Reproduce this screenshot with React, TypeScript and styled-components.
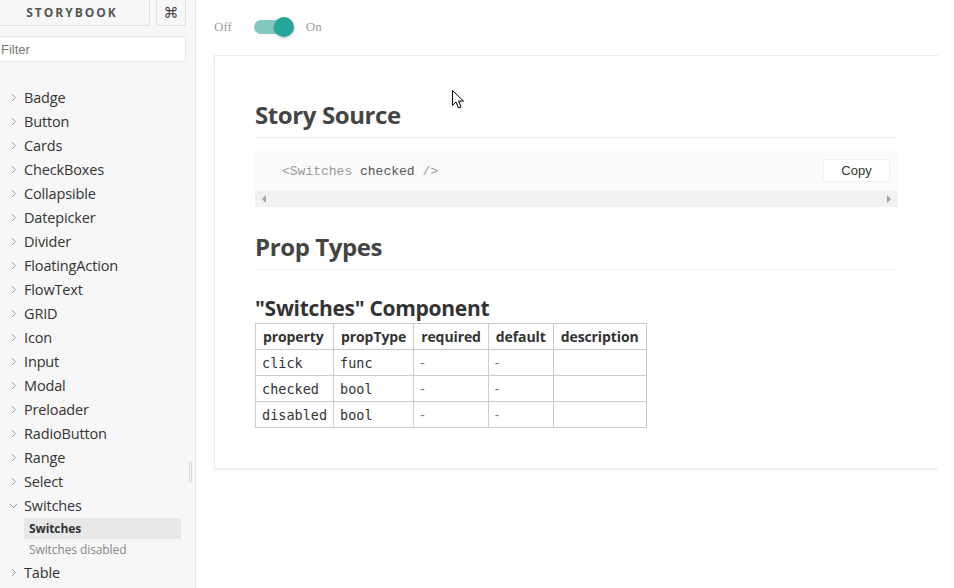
import React from "react";
import styled, { createGlobalStyle } from "styled-components";

const Global = createGlobalStyle`
  html, body { margin: 0; padding: 0; background: #fff; }
  body { font-family: "Open Sans", "Noto Sans", sans-serif; overflow: hidden; }
  * { box-sizing: border-box; }
`;

const Page = styled.div`
  display: flex;
  width: 954px;
  height: 588px;
  overflow: hidden;
  position: relative;
`;

const Sidebar = styled.aside`
  width: 196px;
  flex: none;
  background: #f7f7f7;
  border-right: 1px solid #e3e3e3;
  position: relative;
  overflow: hidden;
`;

const HeaderRow = styled.div`
  display: flex;
  gap: 6px;
  margin-left: -8px;
  width: 194px;
`;

const BrandBox = styled.div`
  flex: 1;
  height: 26px;
  border: 1px solid #e1e1e1;
  border-top: none;
  border-radius: 0 0 3px 3px;
  display: flex;
  align-items: center;
  justify-content: center;
  font-family: "Open Sans", sans-serif;
  font-weight: 700;
  font-size: 12px;
  letter-spacing: 2px;
  color: #555;
  padding-left: 2px;
`;

const KeyBox = styled.div`
  width: 30px;
  height: 26px;
  border: 1px solid #e1e1e1;
  border-top: none;
  border-radius: 0 0 3px 3px;
  display: flex;
  align-items: center;
  justify-content: center;
  font-size: 15px;
  color: #444;
  font-family: "DejaVu Sans", sans-serif;
`;

const Filter = styled.div`
  margin: 10px 0 0 -8px;
  width: 194px;
  height: 26px;
  background: #fff;
  border: 1px solid #e6e6e6;
  border-radius: 2px;
  display: flex;
  align-items: center;
  padding-left: 8px;
  font-size: 13px;
  color: #777;
  font-family: "Liberation Sans", Arial, sans-serif;
`;

const Tree = styled.ul`
  list-style: none;
  margin: 23px 0 0 0;
  padding: 0;
`;

const Item = styled.li`
  height: 24px;
  display: flex;
  align-items: center;
  gap: 5px;
  padding-left: 8px;
  font-size: 14.5px;
  color: #333;
  letter-spacing: -0.15px;
`;

const Chevron = styled.svg`
  width: 11px;
  height: 11px;
  flex: none;
`;

const SubList = styled.ul`
  list-style: none;
  margin: 0;
  padding: 1px 0 0 24px;
`;

const SubItem = styled.li<{ $active?: boolean }>`
  height: 21px;
  width: 157px;
  display: flex;
  align-items: center;
  padding-left: 5px;
  font-size: 12px;
  font-weight: ${(p) => (p.$active ? 700 : 400)};
  color: ${(p) => (p.$active ? "#333" : "#888")};
  background: ${(p) => (p.$active ? "#e8e8e8" : "transparent")};
  letter-spacing: -0.1px;
`;

const ScrollThumb = styled.div`
  position: absolute;
  left: 189px;
  top: 462px;
  width: 3px;
  height: 20px;
  border-left: 1px solid #d8d8d8;
  border-right: 1px solid #d8d8d8;
`;

const Main = styled.main`
  flex: 1;
  padding: 0 0 0 18px;
  overflow: hidden;
`;

const ToggleRow = styled.div`
  height: 55px;
  display: flex;
  align-items: center;
  font-family: "Liberation Serif", serif;
  font-size: 13px;
  color: #9e9e9e;
  padding-bottom: 2px;
`;

const Track = styled.div`
  position: relative;
  width: 38px;
  height: 14px;
  margin: 0 14px 0 22px;
  border-radius: 8px;
  background: #84c7c1;
`;

const Knob = styled.div`
  position: absolute;
  right: -2px;
  top: -3px;
  width: 20px;
  height: 20px;
  border-radius: 50%;
  background: #26a69a;
  box-shadow: 0 1px 3px rgba(0, 0, 0, 0.25);
`;

const Card = styled.section`
  width: 724px;
  border: 1px solid #ececec;
  border-right: none;
  box-shadow: 0 2px 3px rgba(0, 0, 0, 0.06);
  padding: 41px 40px 40px 40px;
  font-family: "Open Sans", sans-serif;
  color: #333;
`;

const H2 = styled.h2`
  margin: 0 0 13px 0;
  padding: 0 0 4px 0;
  font-size: 24px;
  font-weight: 700;
  color: #444;
  letter-spacing: -0.4px;
  line-height: 36px;
  border-bottom: 1px solid #eeeeee;
`;

const CodeBlock = styled.div`
  background: #fafafa;
  position: relative;
  margin-bottom: 22px;
`;

const CodeLine = styled.pre`
  margin: 0;
  height: 40px;
  display: flex;
  align-items: center;
  padding-left: 27px;
  font-family: "Liberation Mono", "Courier New", monospace;
  font-size: 13px;
  color: #999;
`;

const Attr = styled.span`
  color: #555;
`;

const CopyButton = styled.button`
  position: absolute;
  right: 8px;
  top: 8px;
  width: 67px;
  height: 23px;
  background: #fff;
  border: 1px solid #eee;
  border-radius: 2px;
  font-family: "Liberation Sans", Arial, sans-serif;
  font-size: 13px;
  color: #333;
  padding: 0;
`;

const HScroll = styled.div`
  height: 16px;
  background: #f1f1f1;
  display: flex;
  align-items: center;
  justify-content: space-between;
  padding: 0 6px;
`;

const Arrow = styled.svg`
  width: 6px;
  height: 8px;
`;

const H3 = styled.h3`
  margin: 25px 0 2px 0;
  font-size: 21px;
  font-weight: 700;
  color: #333;
  line-height: 26px;
  letter-spacing: -0.3px;
`;

const Table = styled.table`
  border-collapse: collapse;
  font-size: 14px;
`;

const Th = styled.th`
  border: 1px solid #ccc;
  height: 26px;
  padding: 0 7px;
  font-weight: 700;
  text-align: left;
  color: #333;
  font-size: 14px;
  letter-spacing: -0.1px;
`;

const Td = styled.td<{ $mono?: boolean }>`
  border: 1px solid #ccc;
  height: 26px;
  padding: 0 6px;
  font-family: ${(p) => (p.$mono ? '"DejaVu Sans Mono", monospace' : '"Open Sans", sans-serif')};
  font-size: ${(p) => (p.$mono ? "13.5px" : "14px")};
  color: ${(p) => (p.$mono ? "#333" : "#777")};
`;

const Cursor = styled.svg`
  position: absolute;
  left: 452px;
  top: 90px;
  width: 13px;
  height: 19px;
`;

const items = [
  "Badge",
  "Button",
  "Cards",
  "CheckBoxes",
  "Collapsible",
  "Datepicker",
  "Divider",
  "FloatingAction",
  "FlowText",
  "GRID",
  "Icon",
  "Input",
  "Modal",
  "Preloader",
  "RadioButton",
  "Range",
  "Select",
];

const ChevronRight = () => (
  <Chevron viewBox="0 0 11 11">
    <path d="M4 2 L7.5 5.5 L4 9" fill="none" stroke="#999" strokeWidth="1" />
  </Chevron>
);

const ChevronDown = () => (
  <Chevron viewBox="0 0 11 11">
    <path d="M2 4 L5.5 7.5 L9 4" fill="none" stroke="#999" strokeWidth="1" />
  </Chevron>
);

const rows = [
  ["click", "func"],
  ["checked", "bool"],
  ["disabled", "bool"],
];

export default function App() {
  return (
    <>
      <Global />
      <Page>
        <Sidebar>
          <HeaderRow>
            <BrandBox>STORYBOOK</BrandBox>
            <KeyBox>⌘</KeyBox>
          </HeaderRow>
          <Filter>Filter</Filter>
          <Tree>
            {items.map((name) => (
              <Item key={name}>
                <ChevronRight />
                {name}
              </Item>
            ))}
            <Item>
              <ChevronDown />
              Switches
            </Item>
            <SubList>
              <SubItem $active>Switches</SubItem>
              <SubItem>Switches disabled</SubItem>
            </SubList>
            <Item>
              <ChevronRight />
              Table
            </Item>
          </Tree>
          <ScrollThumb />
        </Sidebar>
        <Main>
          <ToggleRow>
            Off
            <Track>
              <Knob />
            </Track>
            On
          </ToggleRow>
          <Card>
            <H2>Story Source</H2>
            <CodeBlock>
              <CodeLine>
                {"<Switches "}
                <Attr>checked</Attr>
                {" />"}
              </CodeLine>
              <CopyButton>Copy</CopyButton>
              <HScroll>
                <Arrow viewBox="0 0 6 8">
                  <path d="M5 0 L1 4 L5 8 Z" fill="#a3a3a3" />
                </Arrow>
                <Arrow viewBox="0 0 6 8">
                  <path d="M1 0 L5 4 L1 8 Z" fill="#a3a3a3" />
                </Arrow>
              </HScroll>
            </CodeBlock>
            <H2>Prop Types</H2>
            <H3>"Switches" Component</H3>
            <Table>
              <thead>
                <tr>
                  <Th>property</Th>
                  <Th>propType</Th>
                  <Th>required</Th>
                  <Th>default</Th>
                  <Th>description</Th>
                </tr>
              </thead>
              <tbody>
                {rows.map(([p, t]) => (
                  <tr key={p}>
                    <Td $mono>{p}</Td>
                    <Td $mono>{t}</Td>
                    <Td>-</Td>
                    <Td>-</Td>
                    <Td></Td>
                  </tr>
                ))}
              </tbody>
            </Table>
          </Card>
        </Main>
        <Cursor viewBox="0 0 13 19">
          <path
            d="M0.5 0.5 L0.5 15.5 L4 12 L6.5 18 L9 17 L6.5 11 L11.5 11 Z"
            fill="#fff"
            stroke="#000"
            strokeWidth="1"
            strokeLinejoin="round"
          />
        </Cursor>
      </Page>
    </>
  );
}
